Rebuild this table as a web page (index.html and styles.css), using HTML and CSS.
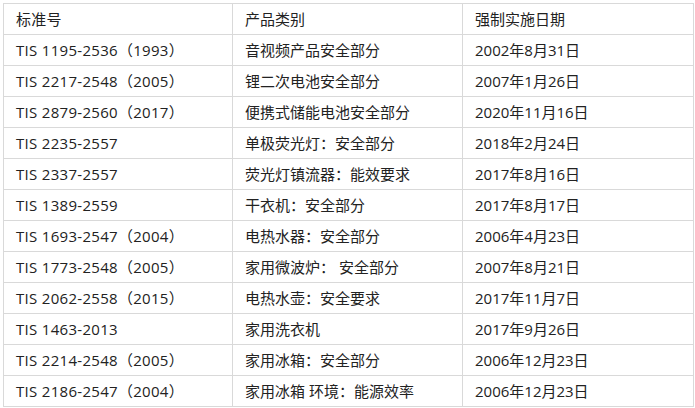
FILE: index.html
```html
<!DOCTYPE html>
<html lang="zh-CN">
<head>
<meta charset="utf-8">
<link rel="stylesheet" href="styles.css">
</head>
<body>
<table class="std-table">
  <colgroup><col class="c1"><col class="c2"><col class="c3"></colgroup>
  <tr><td class="code">标准号</td><td>产品类别</td><td>强制实施日期</td></tr>
  <tr><td class="code">TIS 1195-2536（1993）</td><td>音视频产品安全部分</td><td>2002年8月31日</td></tr>
  <tr><td class="code">TIS 2217-2548（2005）</td><td>锂二次电池安全部分</td><td>2007年1月26日</td></tr>
  <tr><td class="code">TIS 2879-2560（2017）</td><td>便携式储能电池安全部分</td><td>2020年11月16日</td></tr>
  <tr><td class="code">TIS 2235-2557</td><td>单极荧光灯：安全部分</td><td>2018年2月24日</td></tr>
  <tr><td class="code">TIS 2337-2557</td><td>荧光灯镇流器：能效要求</td><td>2017年8月16日</td></tr>
  <tr><td class="code">TIS 1389-2559</td><td>干衣机：安全部分</td><td>2017年8月17日</td></tr>
  <tr><td class="code">TIS 1693-2547（2004）</td><td>电热水器：安全部分</td><td>2006年4月23日</td></tr>
  <tr><td class="code">TIS 1773-2548（2005）</td><td>家用微波炉： 安全部分</td><td>2007年8月21日</td></tr>
  <tr><td class="code">TIS 2062-2558（2015）</td><td>电热水壶：安全要求</td><td>2017年11月7日</td></tr>
  <tr><td class="code">TIS 1463-2013</td><td>家用洗衣机</td><td>2017年9月26日</td></tr>
  <tr><td class="code">TIS 2214-2548（2005）</td><td>家用冰箱：安全部分</td><td>2006年12月23日</td></tr>
  <tr><td class="code">TIS 2186-2547（2004）</td><td>家用冰箱 环境：能源效率</td><td>2006年12月23日</td></tr>
</table>
</body>
</html>
```
FILE: styles.css
```css
html, body {
  margin: 0;
  padding: 0;
  background: #fff;
}
body {
  padding: 3px;
  font-family: "Open Sans", "Noto Sans CJK SC", sans-serif;
  font-size: 15px;
  color: #222;
}
.std-table {
  border-collapse: collapse;
  width: 690px;
  table-layout: fixed;
}
.c1 { width: 229px; }
.c2 { width: 230px; }
.c3 { width: 231px; }
.std-table td {
  border: 1px solid #d9d9d9;
  height: 31px;
  padding: 0 0 0 12px;
  box-sizing: border-box;
  line-height: 20px;
  vertical-align: middle;
  white-space: nowrap;
  text-spacing-trim: space-all;
}
.std-table td.code {
  letter-spacing: 0.3px;
}
```
